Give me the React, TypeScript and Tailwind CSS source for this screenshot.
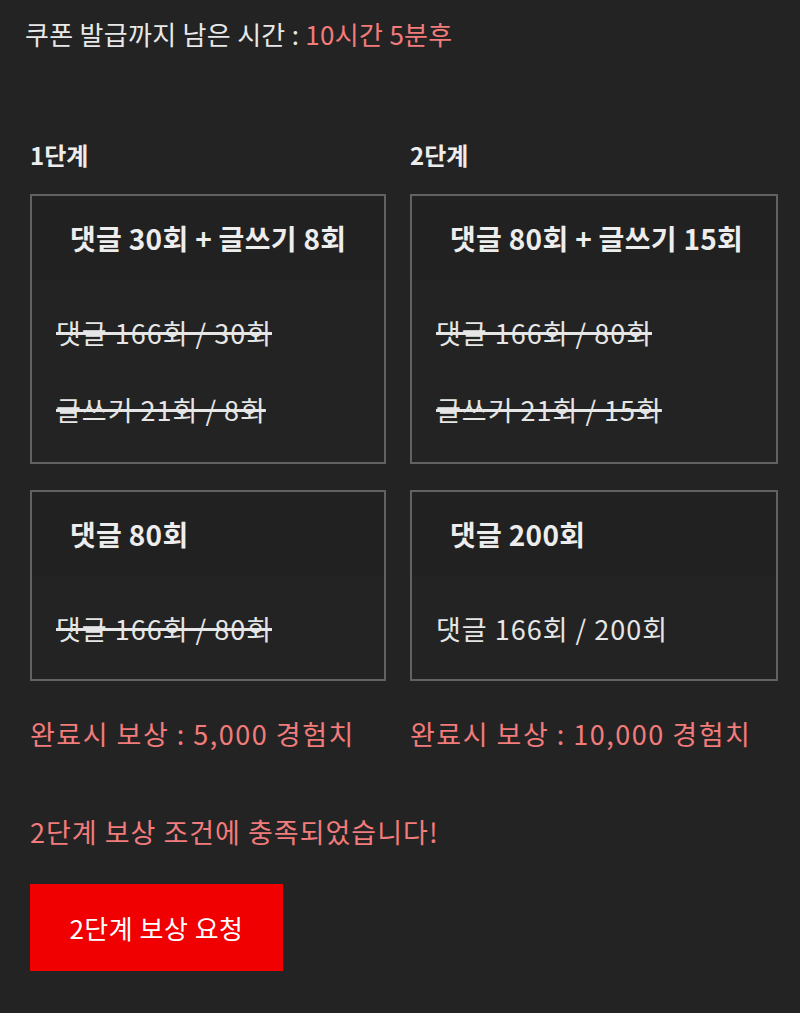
const FONT = "font-['Noto_Sans_CJK_KR','Noto_Sans',sans-serif]"

interface Mission {
  title: string
  lines: { text: string; done: boolean }[]
}

interface Stage {
  label: string
  width: string
  missions: [Mission, Mission]
  reward: string
}

const stages: Stage[] = [
  {
    label: '1단계',
    width: 'w-[356px]',
    missions: [
      {
        title: '댓글 30회 + 글쓰기 8회',
        lines: [
          { text: '댓글 166회 / 30회', done: true },
          { text: '글쓰기 21회 / 8회', done: true },
        ],
      },
      {
        title: '댓글 80회',
        lines: [{ text: '댓글 166회 / 80회', done: true }],
      },
    ],
    reward: '완료시 보상 : 5,000 경험치',
  },
  {
    label: '2단계',
    width: 'w-[368px]',
    missions: [
      {
        title: '댓글 80회 + 글쓰기 15회',
        lines: [
          { text: '댓글 166회 / 80회', done: true },
          { text: '글쓰기 21회 / 15회', done: true },
        ],
      },
      {
        title: '댓글 200회',
        lines: [{ text: '댓글 166회 / 200회', done: false }],
      },
    ],
    reward: '완료시 보상 : 10,000 경험치',
  },
]

function MissionBox({ mission, tall }: { mission: Mission; tall: boolean }) {
  return (
    <div
      className={`flex flex-col border-2 border-[#626262] bg-[#232323] ${tall ? 'h-[270px]' : 'h-[191px]'}`}
    >
      <div className="flex h-[84px] items-center bg-[#212121] pl-[38px]">
        <h3 className="whitespace-nowrap text-[28px] font-bold leading-none tracking-[0.3px] text-[#ededed]">
          {mission.title}
        </h3>
      </div>
      <div className="flex flex-col gap-[41px] pl-[24px] pt-[35px]">
        {mission.lines.map((line) => (
          <p
            key={line.text}
            className={`whitespace-nowrap text-[27px] leading-[36px] tracking-[1px] text-[#e6e6e6] ${line.done ? 'line-through decoration-[3px]' : ''}`}
          >
            {line.text}
          </p>
        ))}
      </div>
    </div>
  )
}

export default function App() {
  return (
    <div className={`min-h-[1013px] w-full bg-[#232323] ${FONT}`}>
      <div className="px-[25px] pt-[15px]">
        <p className="text-[26px] leading-[38px] tracking-[0.3px] text-[#e8e8e8]">
          쿠폰 발급까지 남은 시간 : <span className="text-[#f27b7b]">10시간 5분후</span>
        </p>
      </div>

      <div className="mt-[87px] flex gap-[24px] pl-[30px]">
        {stages.map((stage) => (
          <div key={stage.label} className={`flex flex-col ${stage.width}`}>
            <h2 className="text-[24px] font-bold leading-[30px] text-[#ededed]">
              {stage.label}
            </h2>
            <div className="mt-[24px] flex flex-col gap-[26px]">
              <MissionBox mission={stage.missions[0]} tall />
              <MissionBox mission={stage.missions[1]} tall={false} />
            </div>
            <p className="mt-[34px] whitespace-nowrap text-[27px] leading-[38px] tracking-[1.5px] text-[#f27b7b]">
              {stage.reward}
            </p>
          </div>
        ))}
      </div>

      <div className="flex flex-col items-start px-[30px]">
        <p className="mt-[60px] text-[27px] leading-[38px] tracking-[1px] text-[#f27b7b]">
          2단계 보상 조건에 충족되었습니다!
        </p>
        <button
          type="button"
          className="mt-[33px] flex h-[87px] w-[253px] items-center justify-center bg-[#f00000] text-[26px] tracking-[0.5px] text-white"
        >
          2단계 보상 요청
        </button>
      </div>
    </div>
  )
}
